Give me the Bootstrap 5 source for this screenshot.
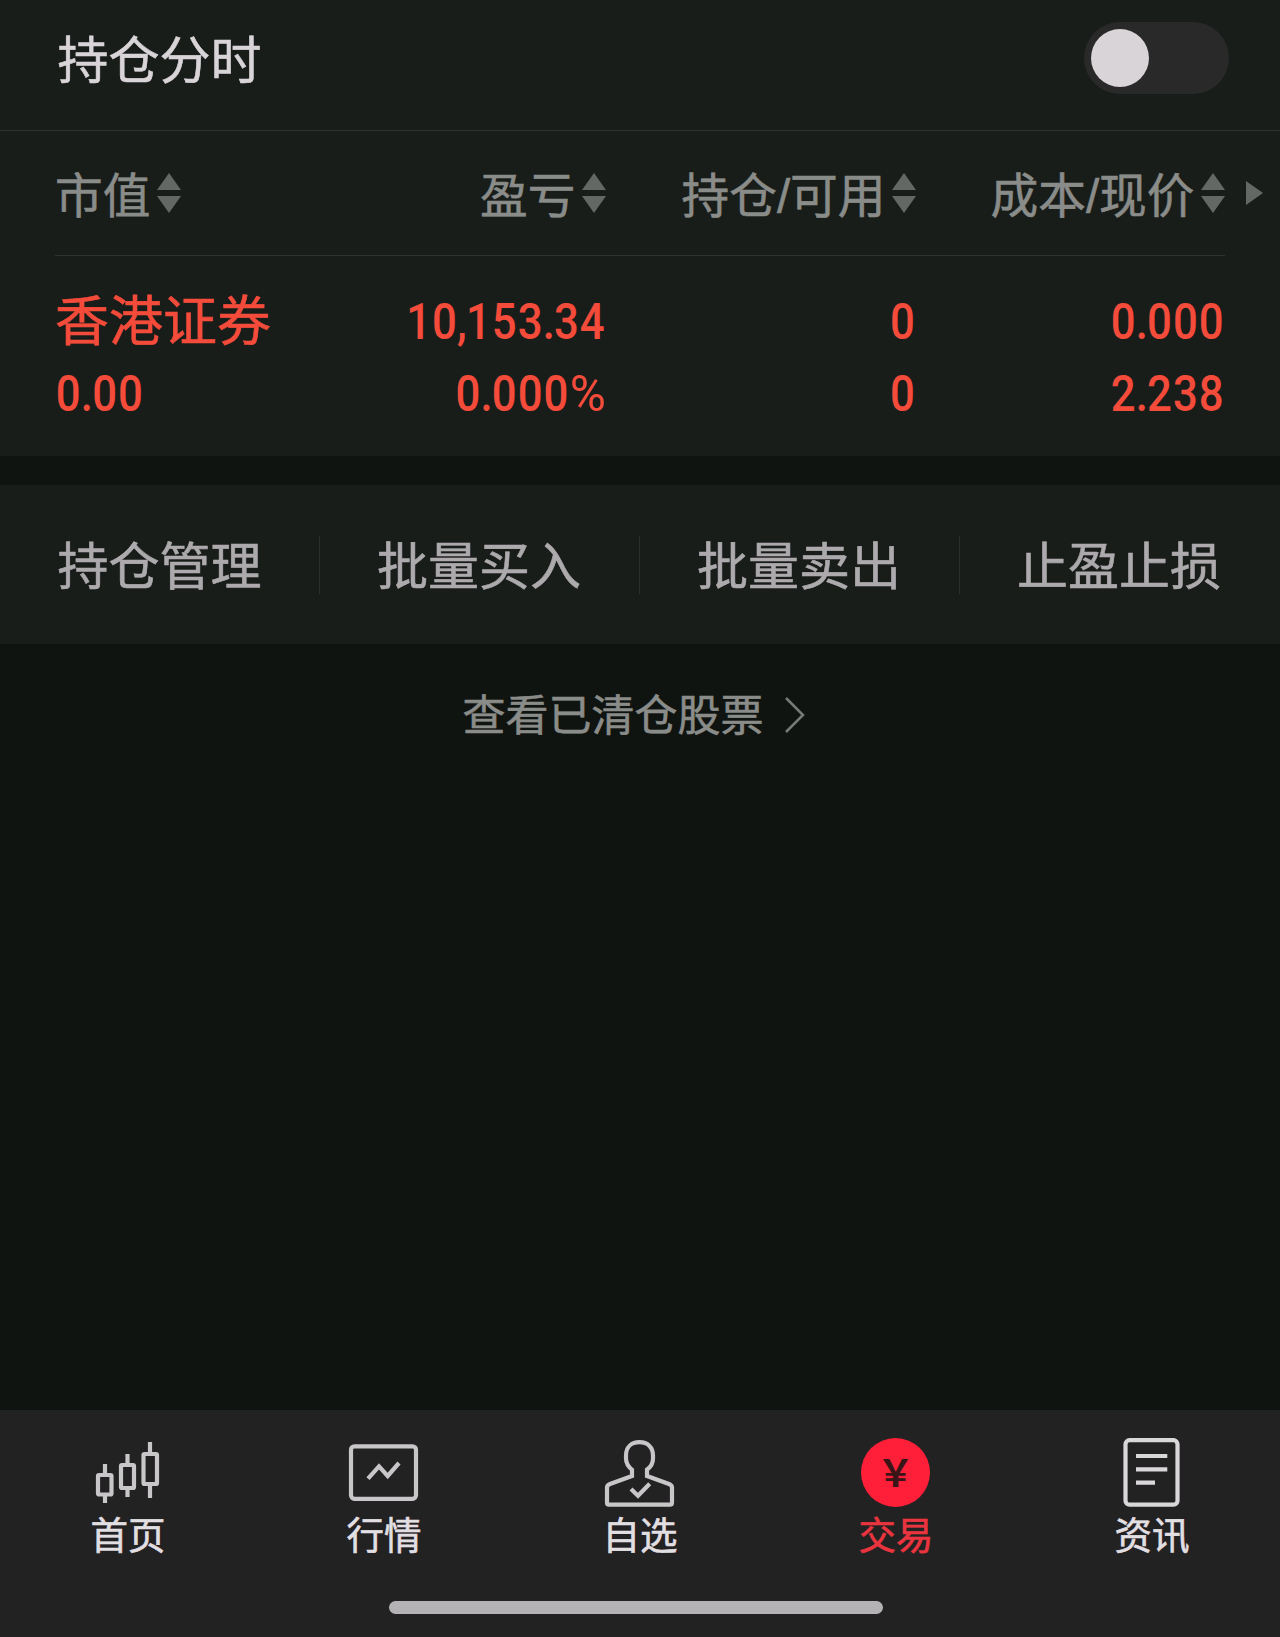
<!DOCTYPE html>
<html lang="zh-CN">
<head>
<meta charset="utf-8">
<meta name="viewport" content="width=device-width, initial-scale=1">
<title>持仓</title>
<link href="https://cdn.jsdelivr.net/npm/bootstrap@5.3.0/dist/css/bootstrap.min.css" rel="stylesheet">
<style>
  body { background:#101410; font-family:"Noto Sans CJK SC",sans-serif; min-height:1637px; -webkit-text-stroke:.6px currentColor; }
  .panel { background:#191d1a; }
  .title-bar { height:131px; padding:0 51px 15px 57.5px; border-bottom:1px solid #30322f; color:#d8d4d8; font-size:51px; line-height:72px; }
  .title-bar > span { padding-bottom:2px; }
  .form-switch .pill { width:145px; height:72px; margin:0; background:#2a292a; border-radius:36px; padding:7px; }
  .pill span { display:block; width:58px; height:58px; background:#d8d4d8; border-radius:50%; }
  .cols { display:grid; grid-template-columns:551px 310px 309px 1fr; padding-left:55px; }
  .heads { height:124px; color:#8a8c89; font-size:47.7px; line-height:60px; font-family:"Liberation Sans","Noto Sans CJK SC",sans-serif; }
  .heads .sorter { gap:6.5px; }
  .heads span { padding-top:7px; }
  .heads svg { fill:#646864; }
  .rule { height:1px; margin:0 55px; background:#30322f; }
  .holding { color:#f54b3b; height:200px; padding-top:31px; }
  .holding .cols { height:72px; line-height:72px; }
  .stock { font-size:54px; line-height:62px; }
  .num { font:500 50.5px/70px Roboto,sans-serif; -webkit-text-stroke:0; }
  .num > span { display:inline-block; transform:scaleX(.865); transform-origin:right; letter-spacing:1.2px; }
  .num.first > span { transform-origin:left; padding-left:1px; }
  .num i { font-style:normal; margin-left:-1px; letter-spacing:-1px; }
  .num b { display:inline-block; font-weight:400; transform:scaleX(1.13); transform-origin:right; margin:0 0 0 5.5px; letter-spacing:0; }
  .gap-band { height:29px; }
  .actions { height:159px; color:#adaaad; font-size:51px; line-height:54px; }
  .actions a { color:inherit; text-decoration:none; padding:0 1px 4px 0; }
  .actions a + a { border-left:1px solid #2b302d; position:relative; left:-1px; }
  .cleared { color:#8a8c89; font-size:43px; line-height:60px; padding:38px 12px 0 0; text-decoration:none; gap:20px; }
  .cleared svg { margin-top:5px; }
  .tabs { height:227px; background:#222; color:#e2dfe2; }
  .tabs a { color:inherit; text-decoration:none; padding-top:27px; font-size:37.5px; line-height:44px; }
  .tabs a.active { color:#ea3540; }
  .tabs svg { display:block; margin-bottom:2px; fill:none; stroke:#c9c6c9; stroke-width:4.2; }
  .home-line { width:494px; height:13px; border-radius:7px; background:#b5b2b6; margin:0 8px 23px 0; }
</style>
</head>
<body class="d-flex flex-column m-0">
<svg class="d-none"><symbol id="sort" viewBox="0 0 24 40"><path d="M12 0 24 17H0zM0 23h24L12 40z"/></symbol></svg>

<section class="panel">
  <header class="title-bar d-flex align-items-center justify-content-between">
    <span>持仓分时</span>
    <div class="form-switch p-0"><div class="pill" role="switch" aria-checked="false"><span></span></div></div>
  </header>
  <div class="cols heads align-items-center">
    <div class="d-flex align-items-center justify-content-between">
      <div class="sorter d-flex align-items-center"><span>市值</span><svg width="24" height="40"><use href="#sort"/></svg></div>
      <div class="sorter d-flex align-items-center"><span>盈亏</span><svg width="24" height="40"><use href="#sort"/></svg></div>
    </div>
    <div class="sorter d-flex align-items-center justify-content-end"><span>持仓/可用</span><svg width="24" height="40"><use href="#sort"/></svg></div>
    <div class="sorter d-flex align-items-center justify-content-end"><span>成本/现价</span><svg width="24" height="40"><use href="#sort"/></svg></div>
    <div class="d-flex ps-3"><svg class="ms-1" width="19" height="24" viewBox="-1 0 19 24"><path d="M0 0 17 12 0 24z"/></svg></div>
  </div>
  <div class="rule"></div>
  <div class="holding">
    <div class="cols">
      <div class="d-flex justify-content-between"><span class="stock">香港证券</span><span class="num"><span>10<i>,</i>153<i>.</i>34</span></span></div>
      <div class="num text-end"><span>0</span></div>
      <div class="num text-end"><span>0<i>.</i>000</span></div>
    </div>
    <div class="cols">
      <div class="d-flex justify-content-between"><span class="num first"><span>0<i>.</i>00</span></span><span class="num"><span>0<i>.</i>000<b>%</b></span></span></div>
      <div class="num text-end"><span>0</span></div>
      <div class="num text-end"><span>2<i>.</i>238</span></div>
    </div>
  </div>
</section>
<div class="gap-band"></div>
<nav class="panel actions d-flex align-items-center text-center">
  <a class="flex-fill w-25" href="#">持仓管理</a>
  <a class="flex-fill w-25" href="#">批量买入</a>
  <a class="flex-fill w-25" href="#">批量卖出</a>
  <a class="flex-fill w-25" href="#">止盈止损</a>
</nav>
<a class="cleared d-flex justify-content-center align-items-center" href="#">查看已清仓股票<svg width="22" height="36" viewBox="0 0 22 36" fill="none" stroke="#777a77" stroke-width="2.5"><path d="M2 1 19 18 2 35"/></svg></a>

<footer class="tabs mt-auto d-flex flex-column align-items-center">
  <nav class="d-flex w-100 flex-grow-1">
    <a class="col d-flex flex-column align-items-center" href="#">
      <svg width="72" height="72"><rect x="6" y="38" width="13.5" height="19.5" rx="1"/><rect x="29" y="28" width="13" height="23" rx="1"/><rect x="51.5" y="17" width="13.5" height="30" rx="1"/><path d="M13 27v10M13 58v8M35.5 17v10M35.5 52v8M58 5v11M58 48v13"/></svg><span>首页</span></a>
    <a class="col d-flex flex-column align-items-center" href="#">
      <svg width="72" height="72"><rect x="3" y="9.300" width="65" height="52.500" rx="3.500"/><path d="M20 41.700 31 29.300 39.700 39 51 26"/></svg><span>行情</span></a>
    <a class="col d-flex flex-column align-items-center" href="#">
      <svg width="72" height="72"><path d="M28 32.500V39L6 47Q3 48.200 3 50.500V65.500Q3 67.700 5 67.700H66Q68 67.700 68 65.500V50.500Q68 48.200 65 47L43 39V32.500Q49 28.500 49 21.500V18.500C49 10 43.500 5.200 35.500 5.200S22 10 22 18.500V21.500Q22 28.500 29 33.500"/><path d="M27 52 34 58.800 45.700 46.700"/></svg><span>自选</span></a>
    <a class="col d-flex flex-column align-items-center active" href="#">
      <svg width="72" height="72"><circle cx="35.500" cy="35.500" r="34.500" fill="#ff1f38" stroke="none"/><text x="35.500" y="49.500" text-anchor="middle" font-family="Noto Sans CJK SC,sans-serif" font-size="37" font-weight="700" fill="#3a1518" stroke="none">&#xFFE5;</text></svg><span>交易</span></a>
    <a class="col d-flex flex-column align-items-center" href="#">
      <svg width="72" height="72" style="stroke:#dad7da"><rect x="9.500" y="3.200" width="52" height="64.500" rx="4"/><path d="M20 19H51.300M20 32.300H51.300M20 45.700H39"/></svg><span>资讯</span></a>
  </nav>
  <div class="home-line"></div>
</footer>
<script src="https://cdn.jsdelivr.net/npm/bootstrap@5.3.0/dist/js/bootstrap.bundle.min.js"></script>
</body>
</html>
